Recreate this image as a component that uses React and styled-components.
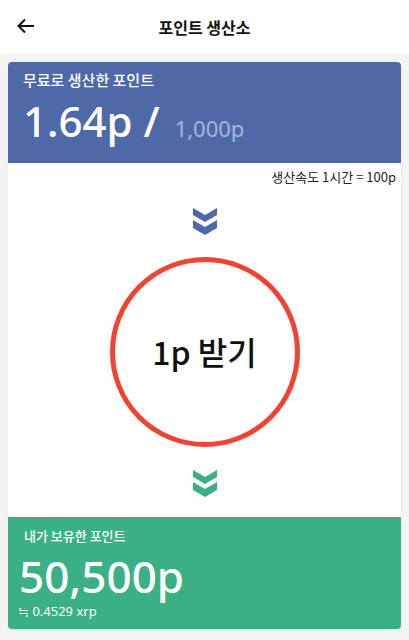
import React from "react";
import styled, { createGlobalStyle } from "styled-components";

const GlobalStyle = createGlobalStyle`
  html, body { margin: 0; padding: 0; }
  body {
    background: #f4f4f4;
    font-family: "Noto Sans CJK KR", "Noto Sans", sans-serif;
  }
`;

const Page = styled.div`
  width: 409px;
  height: 640px;
  display: flex;
  flex-direction: column;
  background: #f4f4f4;
`;

const Header = styled.header`
  height: 53px;
  background: #fff;
  display: flex;
  align-items: center;
  justify-content: center;
  position: relative;
  flex-shrink: 0;
`;

const BackButton = styled.button`
  position: absolute;
  left: 14px;
  top: 14px;
  width: 24px;
  height: 24px;
  padding: 0;
  border: 0;
  background: none;
  display: flex;
  align-items: center;
  justify-content: center;
`;

const Title = styled.h1`
  margin: 0;
  font-size: 16px;
  font-weight: 700;
  color: #111;
`;

const Card = styled.div`
  margin: 9px 8px 11px 8px;
  flex: 1;
  display: flex;
  flex-direction: column;
  border-radius: 4px;
  overflow: hidden;
  background: #fff;
  box-shadow: 0 1px 2px rgba(0, 0, 0, 0.08);
`;

const Panel = styled.section`
  background: ${(p) => p.$bg};
  color: #fff;
  padding: ${(p) => p.$pad};
  flex-shrink: 0;
`;

const Label = styled.div`
  font-size: ${(p) => p.$size};
  font-weight: 500;
  line-height: 18px;
  padding-left: ${(p) => p.$indent || "0px"};
`;

const BigRow = styled.div`
  display: flex;
  align-items: baseline;
  gap: 15px;
  height: ${(p) => p.$h};
  line-height: ${(p) => p.$h};
  margin-top: ${(p) => p.$mt || "0px"};
  padding-left: ${(p) => p.$indent || "0px"};
  font-family: "Noto Sans", sans-serif;
`;

const Big = styled.span`
  font-size: ${(p) => p.$size};
  font-weight: 500;
`;

const Limit = styled.span`
  font-size: 22px;
  color: #a7b6dc;
`;

const Sub = styled.div`
  font-family: "Noto Sans", sans-serif;
  font-size: 13px;
  line-height: 18px;
`;

const Middle = styled.div`
  flex: 1;
  display: flex;
  flex-direction: column;
  align-items: center;
  padding: 6px 0 0;
`;

const Speed = styled.div`
  align-self: flex-end;
  padding-right: 5px;
  font-size: 13px;
  color: #222;
  line-height: 16px;
`;

const Chevron = styled.svg`
  display: block;
  margin-top: ${(p) => p.$mt};
`;

const Claim = styled.button`
  width: 190px;
  height: 190px;
  margin-top: 22px;
  border-radius: 50%;
  border: 5px solid #ef4434;
  background: #fff;
  font-family: "Noto Sans CJK KR", sans-serif;
  font-size: 32px;
  font-weight: 500;
  color: #111;
  display: flex;
  align-items: center;
  justify-content: center;
  padding: 0 0 2px;
  box-sizing: border-box;
`;

const ArrowDown = ({ color, mt }) => (
  <Chevron $mt={mt} width="24" height="27" viewBox="0 0 24 27">
    <polygon points="0,0 12,7 24,0 24,7 12,14 0,7" fill={color} />
    <polygon points="0,12 12,19 24,12 24,20 12,27 0,20" fill={color} />
  </Chevron>
);

export default function App() {
  return (
    <>
      <GlobalStyle />
      <Page>
        <Header>
          <BackButton aria-label="back">
            <svg width="20" height="20" viewBox="0 0 20 20">
              <path d="M18 10H3M9 3.5L2.5 10L9 16.5" stroke="#111" strokeWidth="2" fill="none" />
            </svg>
          </BackButton>
          <Title>포인트 생산소</Title>
        </Header>
        <Card>
          <Panel $bg="#4f69a8" $pad="9px 15px 10px">
            <Label $size="15px">무료로 생산한 포인트</Label>
            <BigRow $h="64px">
              <Big $size="42px">1.64p /</Big>
              <Limit>1,000p</Limit>
            </BigRow>
          </Panel>
          <Middle>
            <Speed>생산속도 1시간 = 100p</Speed>
            <ArrowDown color="#4f69a8" mt="23px" />
            <Claim>1p 받기</Claim>
            <ArrowDown color="#3bb085" mt="23px" />
          </Middle>
          <Panel $bg="#3bb085" $pad="10px 12px 9px 10px">
            <Label $size="13px" $indent="6px">내가 보유한 포인트</Label>
            <BigRow $h="52px" $mt="5px" $indent="1px">
              <Big $size="44px">50,500p</Big>
            </BigRow>
            <Sub>≒ 0.4529 xrp</Sub>
          </Panel>
        </Card>
      </Page>
    </>
  );
}
